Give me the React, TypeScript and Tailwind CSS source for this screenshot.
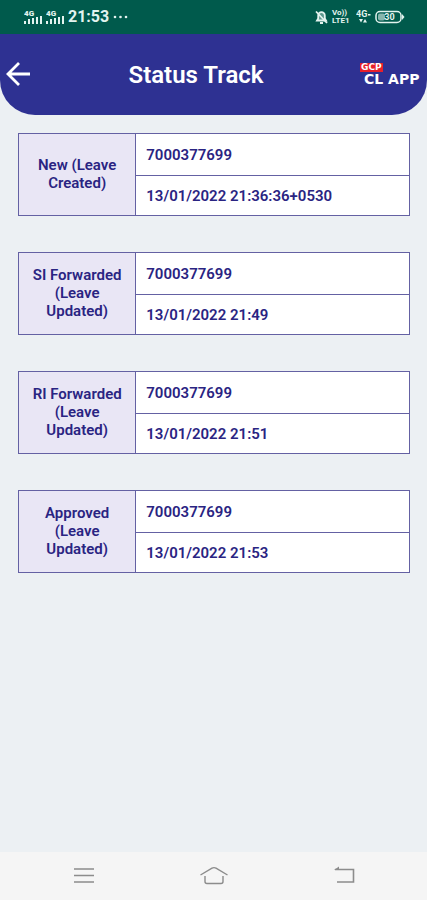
const tracks = [
  { status: "New (Leave Created)", user: "7000377699", time: "13/01/2022 21:36:36+0530" },
  { status: "SI Forwarded (Leave Updated)", user: "7000377699", time: "13/01/2022 21:49" },
  { status: "RI Forwarded (Leave Updated)", user: "7000377699", time: "13/01/2022 21:51" },
  { status: "Approved (Leave Updated)", user: "7000377699", time: "13/01/2022 21:53" },
];

export default function App() {
  return (
    <div className="flex min-h-screen flex-col bg-[#ecf0f3] font-['Roboto',sans-serif]">
      <StatusBar />
      <header className="flex h-[81px] items-center rounded-b-[35px] bg-[#2e3192] pr-2 pl-1 text-white">
        <button type="button" aria-label="Back" className="flex w-7 justify-center">
          <BackIcon />
        </button>
        <h1 className="flex-1 text-center text-2xl font-semibold">Status Track</h1>
        <Logo />
      </header>

      <main className="flex flex-1 flex-col gap-9 pt-[18px] pr-[17px] pb-9 pl-[18px]">
        {tracks.map((track) => (
          <TrackTable key={track.status} {...track} />
        ))}
      </main>

      <NavBar />
    </div>
  );
}

function TrackTable({ status, user, time }: { status: string; user: string; time: string }) {
  return (
    <table className="w-full table-fixed border-collapse bg-white text-[15px] leading-[18px] font-semibold text-[#2a2482]">
      <tbody>
        <tr className="h-[42px]">
          <th scope="rowgroup" rowSpan={2} className="w-[30%] border border-[#6461a3] bg-[#e9e6f5] px-2 pb-0.5 text-center font-semibold">
            {status}
          </th>
          <td className="border border-[#6461a3] px-[10px]">{user}</td>
        </tr>
        <tr className="h-10">
          <td className="border border-[#6461a3] px-[10px]">{time}</td>
        </tr>
      </tbody>
    </table>
  );
}

function StatusBar() {
  return (
    <div className="flex h-[34px] items-center justify-between bg-[#005a4c] pr-[22px] pl-6 text-[#e3f3ef]">
      <div className="flex items-center gap-1">
        <SignalIcon />
        <SignalIcon />
        <span className="text-base font-bold">21:53</span>
        <svg width="15" height="4" viewBox="0 0 15 4" fill="currentColor">
          <circle cx="2" cy="2" r="1.3" />
          <circle cx="7.5" cy="2" r="1.3" />
          <circle cx="13" cy="2" r="1.3" />
        </svg>
      </div>
      <div className="flex items-center gap-1">
        <MutedBellIcon />
        <span className="flex w-5 flex-col text-[8px] leading-[8px] font-bold">
          <span>Vo))</span>
          <span>LTE1</span>
        </span>
        <DataIcon />
        <BatteryIcon />
      </div>
    </div>
  );
}

function Logo() {
  return (
    <div className="flex w-[59px] flex-col items-start font-['DejaVu_Sans',sans-serif] font-bold">
      <span className="bg-[#e8202c] px-px text-[9px] leading-[9px]">GCP</span>
      <span className="pl-1 text-[14px] leading-[14px] whitespace-nowrap">CL APP</span>
    </div>
  );
}

function NavBar() {
  return (
    <nav className="flex h-12 items-center justify-between bg-[#f5f5f5] px-[69px] text-[#8c8c8c]">
      <button type="button" aria-label="Recent apps">
        <svg width="28" height="24" viewBox="0 0 28 24" fill="none" stroke="currentColor" strokeWidth="1.6">
          <path d="M5 5h20M5 11.5h20M5 18h20" />
        </svg>
      </button>
      <button type="button" aria-label="Home">
        <svg width="28" height="24" viewBox="0 0 28 24" fill="none" stroke="currentColor" strokeWidth="1.4">
          <path d="M0.5 11 12 4.2Q14 3 16 4.2L27.5 11" />
          <path d="M5 12V17.5Q5 19.5 7 19.5H21Q23 19.5 23 17.5V12" />
        </svg>
      </button>
      <button type="button" aria-label="Back">
        <svg width="28" height="24" viewBox="0 0 28 24" fill="none" stroke="currentColor" strokeWidth="1.6">
          <path d="M5 5.5H23.5V18H7" />
          <path d="M4 6l5-3.5v3.5z" fill="currentColor" stroke="none" />
        </svg>
      </button>
    </nav>
  );
}

function BackIcon() {
  return (
    <svg width="26" height="26" viewBox="0 0 26 26" fill="none" stroke="currentColor" strokeWidth="2.8">
      <path d="M25 12H3M14 1 3 12l11 11" />
    </svg>
  );
}

function SignalIcon() {
  return (
    <svg width="18" height="16" viewBox="0 0 18 16" fill="currentColor">
      <text x="0" y="7" fontSize="8" fontWeight="900">4G</text>
      <path d="M0 12h2v3H0zM4 10h2v5H4zM8 9h2v6H8zM12 8h2v7h-2zM16 7h2v8h-2z" />
    </svg>
  );
}

function MutedBellIcon() {
  return (
    <svg width="13" height="14" viewBox="0 0 13 14" fill="none" stroke="currentColor" strokeWidth="1.8">
      <path d="M2 10.5h9L9.8 8.5V5.5a3.3 3.3 0 00-6.6 0v3z" fill="currentColor" fillOpacity="0.4" />
      <path d="M5 13h3M1 1.5l11 11.5" />
    </svg>
  );
}

function DataIcon() {
  return (
    <svg width="15" height="14" viewBox="0 0 15 14" fill="currentColor">
      <text x="0" y="7" fontSize="9" fontWeight="700">4G</text>
      <path d="M12 4h2.500v1.500H12zM3 9h4L5 12.500zM7 12.500h4L9 9z" />
    </svg>
  );
}

function BatteryIcon() {
  return (
    <svg width="30" height="14" viewBox="0 0 30 14" fill="none">
      <rect x="1" y="1.5" width="25" height="11" rx="4" stroke="currentColor" strokeWidth="1.5" />
      <rect x="3" y="3.5" width="7" height="7" rx="2" fill="currentColor" opacity="0.6" />
      <path d="M27 4 29.500 7 27 10z" fill="currentColor" />
      <text x="14.5" y="10" fontSize="9" fontWeight="700" textAnchor="middle" fill="currentColor">30</text>
    </svg>
  );
}
